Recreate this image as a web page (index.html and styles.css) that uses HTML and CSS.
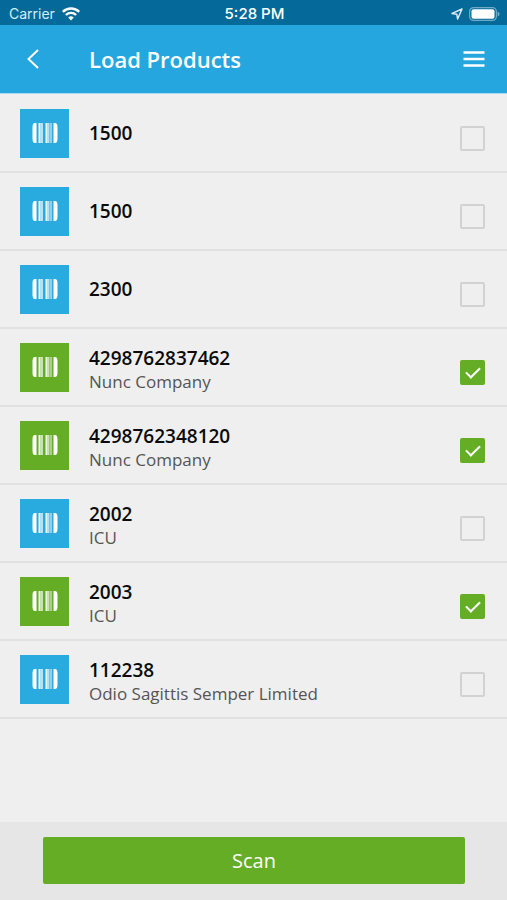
FILE: index.html
```html
<!DOCTYPE html>
<html lang="en">
<head>
<meta charset="utf-8">
<meta name="viewport" content="width=device-width, initial-scale=1">
<title>Load Products</title>
<link rel="stylesheet" href="styles.css">
</head>
<body>
<svg class="sprite" aria-hidden="true">
  <symbol id="barcode" viewBox="0 0 26 20">
    <path d="M4.500 0H3Q.5 0 .5 4v12q0 4 2.500 4h1.500zM21.500 0H23q2.500 0 2.500 4v12q0 4-2.500 4h-1.500z"/>
    <path opacity=".9" d="M6.500 0h2v20h-2zM13.500 0h2v20h-2zM18.500 0h1v20h-1z"/>
    <path opacity=".65" d="M8.500 0H11v20H8.500zM15.500 0h2v20h-2z"/>
  </symbol>
</svg>
<div class="status">
  <div class="carrier"><span>Carrier</span>
    <svg width="18" height="14" viewBox="0 0 18 14" fill="none" stroke="#fff" stroke-width="2.4"><path d="M.8 4.900a11.600 11.600 0 0 1 16.400 0M3.900 8a7.200 7.200 0 0 1 10.200 0"/><path d="M9 13.400 6.200 10.600a4 4 0 0 1 5.600 0z" fill="#fff" stroke="none"/></svg>
  </div>
  <div class="time">5:28 PM</div>
  <div class="indicators">
    <svg width="12" height="12" viewBox="0 0 12 12" fill="none" stroke="#d5edf7" stroke-width="1.5" stroke-linejoin="round"><path d="M11 1 1 5.400l4.800.8.8 4.800z"/></svg>
    <svg width="31" height="14" viewBox="0 0 31 14"><rect x=".6" y=".6" width="26.800" height="12.800" rx="4" fill="none" stroke="#71aac6" stroke-width="1.2"/><rect x="2.500" y="2.300" width="23" height="9.400" rx="2" fill="#fff"/><path d="M28.600 4.500q2 .8 2 2.500t-2 2.500z" fill="#71aac6"/></svg>
  </div>
</div>
<header class="bar">
  <button class="back" type="button" aria-label="Back"><svg width="12" height="20" viewBox="0 0 12 20" fill="none" stroke="#fff" stroke-width="2"><path d="M11 1 1.500 10l9.500 9"/></svg></button>
  <h1>Load Products</h1>
  <button class="menu" type="button" aria-label="Menu"><svg width="22" height="18" viewBox="0 0 22 18" fill="none" stroke="#fff" stroke-width="2.4"><path d="M0.500 2.500h21M0.500 9h21M0.500 15.500h21"/></svg></button>
</header>
<main>
  <ul class="products">
    <li><label class="row"><span class="tile"><svg><use href="#barcode"/></svg></span><span class="text"><b>1500</b></span><input type="checkbox"></label></li>
    <li><label class="row"><span class="tile"><svg><use href="#barcode"/></svg></span><span class="text"><b>1500</b></span><input type="checkbox"></label></li>
    <li><label class="row"><span class="tile"><svg><use href="#barcode"/></svg></span><span class="text"><b>2300</b></span><input type="checkbox"></label></li>
    <li><label class="row"><span class="tile"><svg><use href="#barcode"/></svg></span><span class="text"><b>4298762837462</b><span>Nunc Company</span></span><input type="checkbox" checked></label></li>
    <li><label class="row"><span class="tile"><svg><use href="#barcode"/></svg></span><span class="text"><b>4298762348120</b><span>Nunc Company</span></span><input type="checkbox" checked></label></li>
    <li><label class="row"><span class="tile"><svg><use href="#barcode"/></svg></span><span class="text"><b>2002</b><span>ICU</span></span><input type="checkbox"></label></li>
    <li><label class="row"><span class="tile"><svg><use href="#barcode"/></svg></span><span class="text"><b>2003</b><span>ICU</span></span><input type="checkbox" checked></label></li>
    <li><label class="row"><span class="tile"><svg><use href="#barcode"/></svg></span><span class="text"><b>112238</b><span>Odio Sagittis Semper Limited</span></span><input type="checkbox"></label></li>
  </ul>
</main>
<footer><button class="scan" type="button">Scan</button></footer>
</body>
</html>
```
FILE: styles.css
```css
* {
  box-sizing: border-box;
}

body {
  margin: 0;
  min-height: 100vh;
  display: flex;
  flex-direction: column;
  background: #efefef;
  color: #0b0b0b;
  font-family: "Open Sans", "Noto Sans", sans-serif;
}

button {
  margin: 0;
  padding: 0;
  border: 0;
  background: none;
  color: inherit;
  font: inherit;
}

svg {
  display: block;
}

.sprite {
  position: absolute;
  width: 0;
  height: 0;
}

.status {
  display: grid;
  grid-template-columns: 1fr auto 1fr;
  align-items: center;
  height: 25px;
  padding: 2px 7px 0 9px;
  background: #056a99;
  color: #fff;
  font: 14px/20px Inter, sans-serif;
}

.carrier {
  display: flex;
  align-items: center;
  gap: 7px;
  color: #d5edf7;
}

.time {
  font-size: 15px;
  font-weight: 500;
}

.indicators {
  display: flex;
  align-items: center;
  justify-content: flex-end;
  gap: 6px;
}

.bar {
  display: flex;
  align-items: center;
  height: 69px;
  padding: 0 22px 0 27px;
  border-bottom: 1px solid #a9dcf0;
  background: #25a6df;
  color: #fff;
}

.back {
  width: 62px;
}

.bar h1 {
  flex: 1;
  margin: 0;
  font-size: 22px;
  line-height: 30px;
  font-weight: 600;
}

.products {
  margin: 0;
  padding: 1px 0 0;
  list-style: none;
}

.row {
  display: flex;
  align-items: center;
  height: 78px;
  padding: 1px 22px 0 20px;
  border-bottom: 2px solid #e1e1e1;
}

.tile {
  display: grid;
  place-items: center;
  width: 49px;
  height: 49px;
  margin-right: 20px;
  background: #29abe0;
}

.tile svg {
  width: 26px;
  height: 20px;
  margin-bottom: 2px;
  fill: #fff;
}

.row:has(:checked) .tile {
  background: #65ad24;
}

.text {
  flex: 1;
  display: flex;
  flex-direction: column;
  color: #555;
  font-size: 17px;
  line-height: 23px;
}

.text:has(span) {
  padding-top: 5px;
}

.text b {
  color: #0b0b0b;
  font-size: 19px;
  font-weight: 600;
}

.row input {
  appearance: none;
  width: 25px;
  height: 25px;
  margin: 10px 0 0;
  border: 2px solid #d2d2d2;
  border-radius: 2px;
}

.row input:checked {
  display: grid;
  place-items: center;
  border: 0;
  background: #65ad24;
}

.row input:checked::before {
  content: "";
  width: 12px;
  height: 6px;
  margin-bottom: 4px;
  border: solid #fff;
  border-width: 0 0 2px 2px;
  transform: rotate(-45deg);
}

footer {
  display: flex;
  margin-top: auto;
  padding: 15px 42px 16px 43px;
  background: #e6e6e6;
}

.scan {
  flex: 1;
  height: 47px;
  border-radius: 2px;
  background: #65ad24;
  color: #fff;
  font-size: 20px;
}
```
